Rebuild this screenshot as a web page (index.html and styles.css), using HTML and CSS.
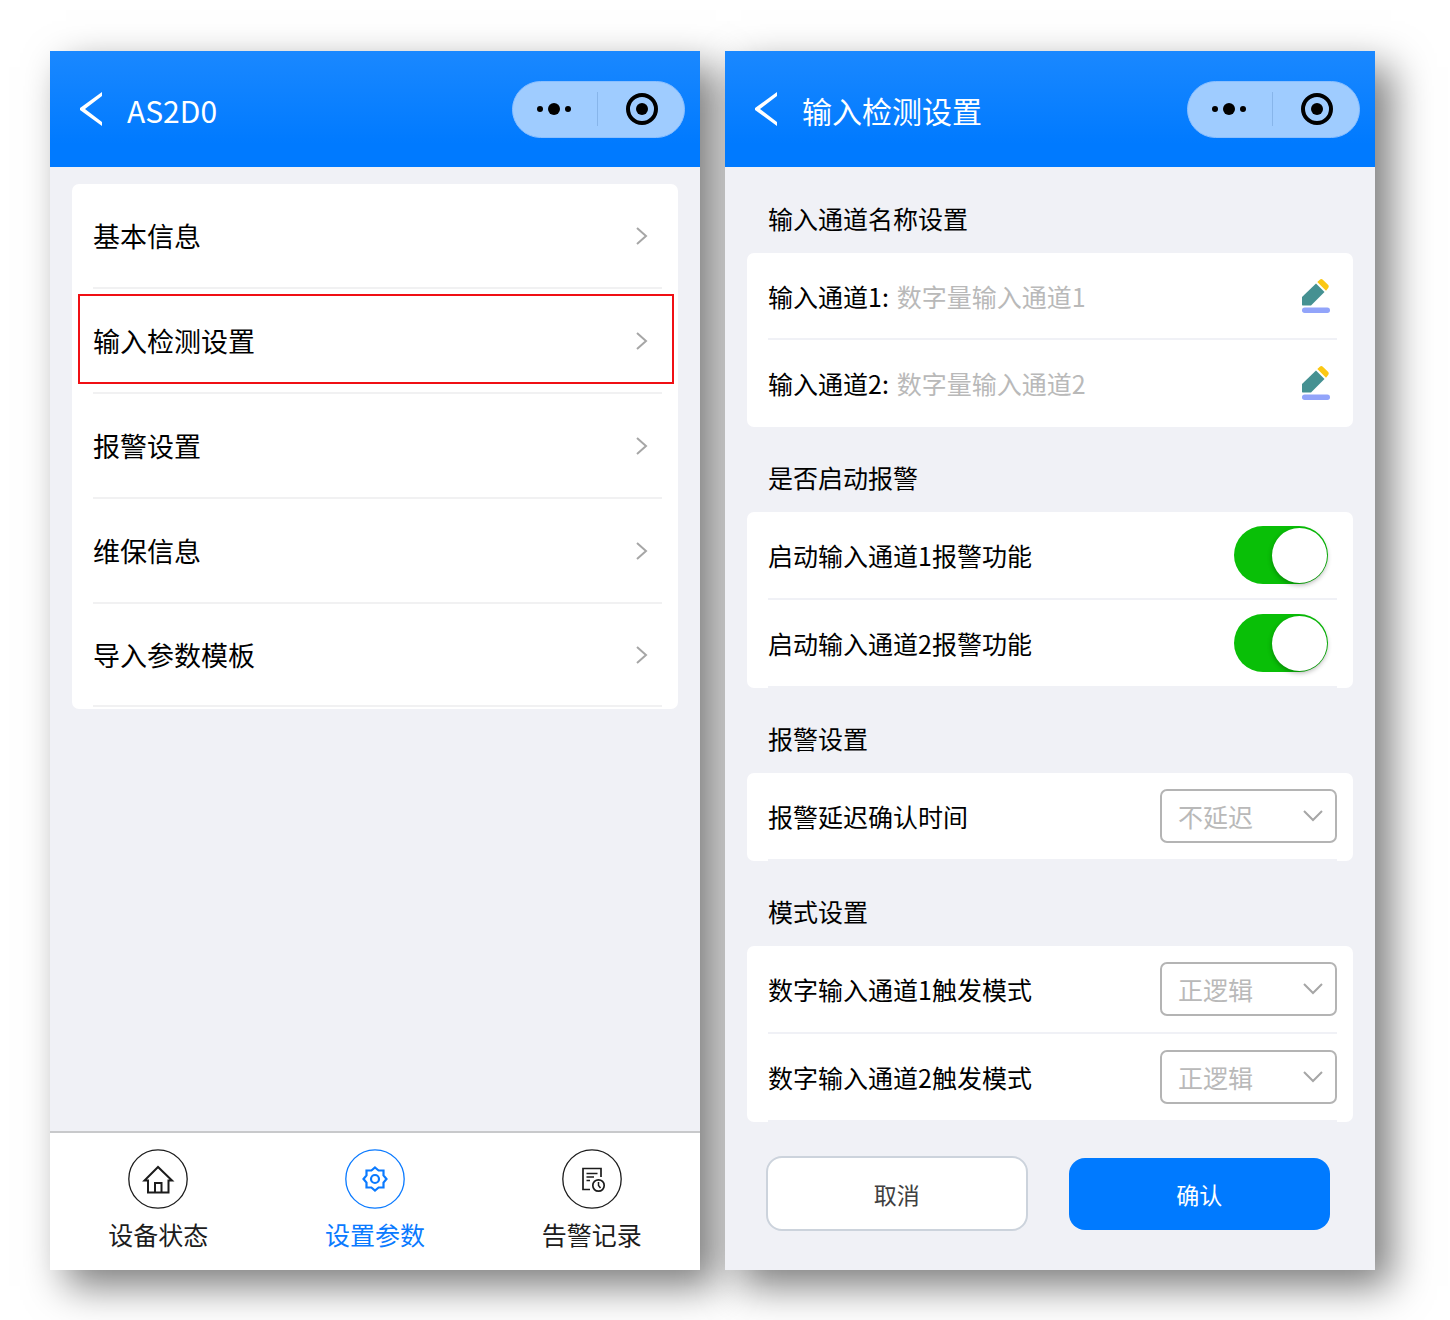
FILE: index.html
```
<!DOCTYPE html>
<html lang="zh-CN">
<head>
    <meta charset="UTF-8">
    <meta name="viewport" content="width=device-width, initial-scale=1.0">
    <title>输入检测设置</title>
    <link rel="stylesheet" href="styles.css">
</head>
<body>
    <!-- icons used more than once -->
    <svg class="sprite" aria-hidden="true">
        <symbol id="back" viewBox="0 0 22 34">
            <path d="M22 0v4L5 17l17 13v4L0 18v-2z" fill="#fff"/>
        </symbol>
        <symbol id="dots" viewBox="0 0 36 12">
            <circle cx="3" cy="6" r="3"/>
            <circle cx="17" cy="6" r="6"/>
            <circle cx="31" cy="6" r="3"/>
        </symbol>
        <symbol id="target" viewBox="0 0 32 32">
            <circle cx="16" cy="16" r="14" fill="none" stroke="#000" stroke-width="4"/>
            <circle cx="16" cy="16" r="6"/>
        </symbol>
        <symbol id="arrow" viewBox="0 0 12 18">
            <path d="M1 1l9 8-9 8" fill="none" stroke="#a6a6a6" stroke-width="2"/>
        </symbol>
        <symbol id="pencil" viewBox="0 0 28 34">
            <path d="M14 4.500L22.500 13 9 26.500H0.500L0 26V18z" fill="#459192"/>
            <path d="M15.300 3L17.800 0.700Q19.300-.5 20.800.7L26 5.800Q27.500 7.500 26 9.200L24 11.700z" fill="#fbc814"/>
            <rect x="0" y="28.500" width="28" height="5.500" rx="2.700" fill="#92a4fa"/>
        </symbol>
    </svg>

    <section class="phone">
        <header class="topbar">
            <button class="back" type="button" aria-label="返回"><svg><use href="#back"/></svg></button>
            <h1>AS2D0</h1>
            <div class="capsule">
                <button type="button" aria-label="更多"><svg class="dots"><use href="#dots"/></svg></button>
                <button type="button" aria-label="关闭"><svg class="target"><use href="#target"/></svg></button>
            </div>
        </header>

        <nav class="card menu">
            <a href="#"><span>基本信息</span><svg><use href="#arrow"/></svg></a>
            <a href="#" class="marked"><span>输入检测设置</span><svg><use href="#arrow"/></svg></a>
            <a href="#"><span>报警设置</span><svg><use href="#arrow"/></svg></a>
            <a href="#"><span>维保信息</span><svg><use href="#arrow"/></svg></a>
            <a href="#"><span>导入参数模板</span><svg><use href="#arrow"/></svg></a>
        </nav>

        <nav class="tabbar">
            <a href="#">
                <svg viewBox="0 0 60 60">
                    <circle cx="30" cy="30" r="29.200" stroke-width="1.300"/>
                    <path d="M30 18L16.500 31.500H20V43.500H40.500V31.500H44zM27 43V34H33.500V43" stroke-width="2"/>
                </svg>
                设备状态
            </a>
            <a href="#" class="active">
                <svg viewBox="0 0 60 60">
                    <circle cx="30" cy="30" r="29.200" stroke-width="1.300"/>
                    <path d="M30 18.500L33.600 21.500H38.500V26.400L41.500 30L38.500 33.600V38.500H33.600L30 41.500L26.400 38.500H21.500V33.600L18.500 30L21.500 26.400V21.500H26.400z" stroke-width="2.200"/>
                    <circle cx="30" cy="30" r="4" stroke-width="2.200"/>
                </svg>
                设置参数
            </a>
            <a href="#">
                <svg viewBox="0 0 60 60">
                    <circle cx="30" cy="30" r="29.200" stroke-width="1.300"/>
                    <path d="M28 40.500H21V19.500H39V28M24.500 24.500H35.500M24.500 28H32M24.500 31.500H28" stroke-width="1.700"/>
                    <circle cx="36.500" cy="36.500" r="5.700" stroke-width="1.700"/>
                    <path d="M36.500 33V36.500L38.500 39" stroke-width="1.500"/>
                </svg>
                告警记录
            </a>
        </nav>
    </section>

    <section class="phone">
        <header class="topbar">
            <button class="back" type="button" aria-label="返回"><svg><use href="#back"/></svg></button>
            <h1>输入检测设置</h1>
            <div class="capsule">
                <button type="button" aria-label="更多"><svg class="dots"><use href="#dots"/></svg></button>
                <button type="button" aria-label="关闭"><svg class="target"><use href="#target"/></svg></button>
            </div>
        </header>

        <form class="settings">
            <h2>输入通道名称设置</h2>
            <div class="card names">
                <div class="row">
                    <label for="name1">输入通道1:</label>
                    <input type="text" id="name1" placeholder="数字量输入通道1">
                    <button class="edit" type="button" aria-label="编辑"><svg><use href="#pencil"/></svg></button>
                </div>
                <div class="row">
                    <label for="name2">输入通道2:</label>
                    <input type="text" id="name2" placeholder="数字量输入通道2">
                    <button class="edit" type="button" aria-label="编辑"><svg><use href="#pencil"/></svg></button>
                </div>
            </div>

            <h2>是否启动报警</h2>
            <div class="card">
                <div class="row">
                    <label for="alarm1">启动输入通道1报警功能</label>
                    <input type="checkbox" class="switch" id="alarm1" checked>
                </div>
                <div class="row">
                    <label for="alarm2">启动输入通道2报警功能</label>
                    <input type="checkbox" class="switch" id="alarm2" checked>
                </div>
            </div>

            <h2>报警设置</h2>
            <div class="card">
                <div class="row">
                    <label for="delay">报警延迟确认时间</label>
                    <select id="delay"><option>不延迟</option></select>
                </div>
            </div>

            <h2>模式设置</h2>
            <div class="card">
                <div class="row">
                    <label for="mode1">数字输入通道1触发模式</label>
                    <select id="mode1"><option>正逻辑</option></select>
                </div>
                <div class="row">
                    <label for="mode2">数字输入通道2触发模式</label>
                    <select id="mode2"><option>正逻辑</option></select>
                </div>
            </div>

            <div class="actions">
                <button type="button" class="cancel">取消</button>
                <button type="submit" class="confirm">确认</button>
            </div>
        </form>
    </section>
</body>
</html>
```
FILE: styles.css
```
* {
    box-sizing: border-box;
}
body {
    margin: 0;
    padding: 51px 75px 50px 50px;
    min-height: 100vh;
    display: flex;
    gap: 25px;
    background: #fff;
    color: #000;
    font-family: "Noto Sans CJK SC", sans-serif;
    font-size: 25px;
    line-height: 38px;
}
button, input, select {
    font: inherit;
    color: inherit;
    padding: 0;
    border: none;
    background: none;
}
button {
    cursor: pointer;
}
a {
    color: inherit;
    text-decoration: none;
}
svg {
    display: block;
}
.sprite {
    position: absolute;
    width: 0;
    height: 0;
}

.phone {
    position: relative;
    flex: 1;
    display: flex;
    flex-direction: column;
    background: #f0f1f6;
}
/* shadow sits behind both phones */
.phone::before {
    content: "";
    position: absolute;
    inset: 0;
    z-index: -1;
    box-shadow: 16px 16px 38px rgba(0, 0, 0, 0.52);
}

.topbar {
    display: flex;
    align-items: center;
    height: 116px;
    padding: 0 15px 0 30px;
    background: linear-gradient(#1a88ff, #007aff 80%);
    color: #fff;
}
.topbar h1 {
    flex: 1;
    margin: 0 0 0 25px;
    padding-top: 2px;
    font-size: 30px;
    font-weight: 400;
    line-height: 44px;
}
.back svg {
    width: 22px;
    height: 34px;
}
.capsule {
    display: flex;
    align-items: center;
    width: 173px;
    height: 57px;
    border: 1px solid #8abfff;
    border-radius: 29px;
    background: #9fccff;
}
.capsule button {
    flex: 1;
    display: flex;
    justify-content: center;
    align-items: center;
    height: 34px;
}
.capsule button + button {
    padding-left: 2px;
    border-left: 1px solid #87b5ea;
}
.dots {
    width: 36px;
    height: 12px;
}
.target {
    width: 32px;
    height: 32px;
}

.card {
    border-radius: 7px;
    background: #fff;
}
.menu {
    margin: 17px 22px 0;
    padding: 0 16px 2px 21px;
    font-size: 27px;
}
.menu a {
    position: relative;
    display: flex;
    justify-content: space-between;
    align-items: center;
    height: 105px;
    padding-right: 14px;
    border-bottom: 2px solid #f1f1f2;
}
.menu a:last-child {
    height: 103px;
}
.menu svg {
    width: 12px;
    height: 18px;
}
.marked::after {
    content: "";
    position: absolute;
    inset: 5px -12px 8px -15px;
    border: 2px solid #f00f14;
}

.tabbar {
    display: flex;
    margin-top: auto;
    height: 139px;
    padding-top: 16px;
    border-top: 2px solid #c8c9cb;
    background: #fff;
}
.tabbar a {
    flex: 1;
    display: flex;
    flex-direction: column;
    align-items: center;
    gap: 6px;
    color: #1c1c1c;
}
.tabbar .active {
    color: #0a7aff;
}
.tabbar svg {
    width: 60px;
    height: 60px;
    fill: none;
    stroke: currentColor;
}

.settings {
    padding: 1px 22px 0;
}
.settings h2 {
    margin: 0;
    padding: 31px 21px 16px;
    font-size: 25px;
    font-weight: 400;
}
.row {
    display: flex;
    justify-content: space-between;
    align-items: center;
    height: 88px;
    margin: 0 16px 0 21px;
    border-bottom: 2px solid #f0f1f6;
}
.names .row {
    height: 87px;
}
.names .row:last-child {
    border-color: #fff;
}
.names input {
    flex: 1;
    min-width: 0;
    margin-left: 8px;
}
.names input::placeholder {
    color: #b9b9b9;
}
.edit {
    margin-right: 7px;
}
.edit svg {
    width: 28px;
    height: 34px;
}

.switch {
    appearance: none;
    display: flex;
    align-items: center;
    width: 94px;
    height: 58px;
    margin: 0 9px 0 0;
    padding: 0 1px;
    border-radius: 29px;
    background: #c4c4c4;
}
.switch::before {
    content: "";
    width: 55px;
    height: 55px;
    border-radius: 50%;
    background: #fff;
    box-shadow: 0 2px 5px rgba(0, 0, 0, 0.3);
}
.switch:checked {
    justify-content: flex-end;
    background: #09bf07;
}

select {
    appearance: none;
    width: 177px;
    height: 54px;
    padding: 0 16px;
    border: 2px solid #b4b4b4;
    border-radius: 7px;
    background: url("data:image/svg+xml,%3Csvg xmlns='http://www.w3.org/2000/svg' width='20' height='12'%3E%3Cpath d='M1 1l9 9 9-9' fill='none' stroke='%23a6a6a6' stroke-width='2'/%3E%3C/svg%3E") no-repeat right 12px center;
    color: #b9b9b9;
}
.names input, select {
    line-height: 38px;
}

.actions {
    display: grid;
    grid-template-columns: 1fr 1fr;
    gap: 41px;
    align-items: center;
    padding: 34px 23px 39px 19px;
}
.actions button {
    height: 72px;
    border-radius: 16px;
    font-size: 23px;
}
.actions .cancel {
    height: 75px;
    border: 2px solid #ccd3dc;
    background: #fff;
    color: #404040;
}
.actions .confirm {
    background: #007aff;
    color: #fff;
}
```
